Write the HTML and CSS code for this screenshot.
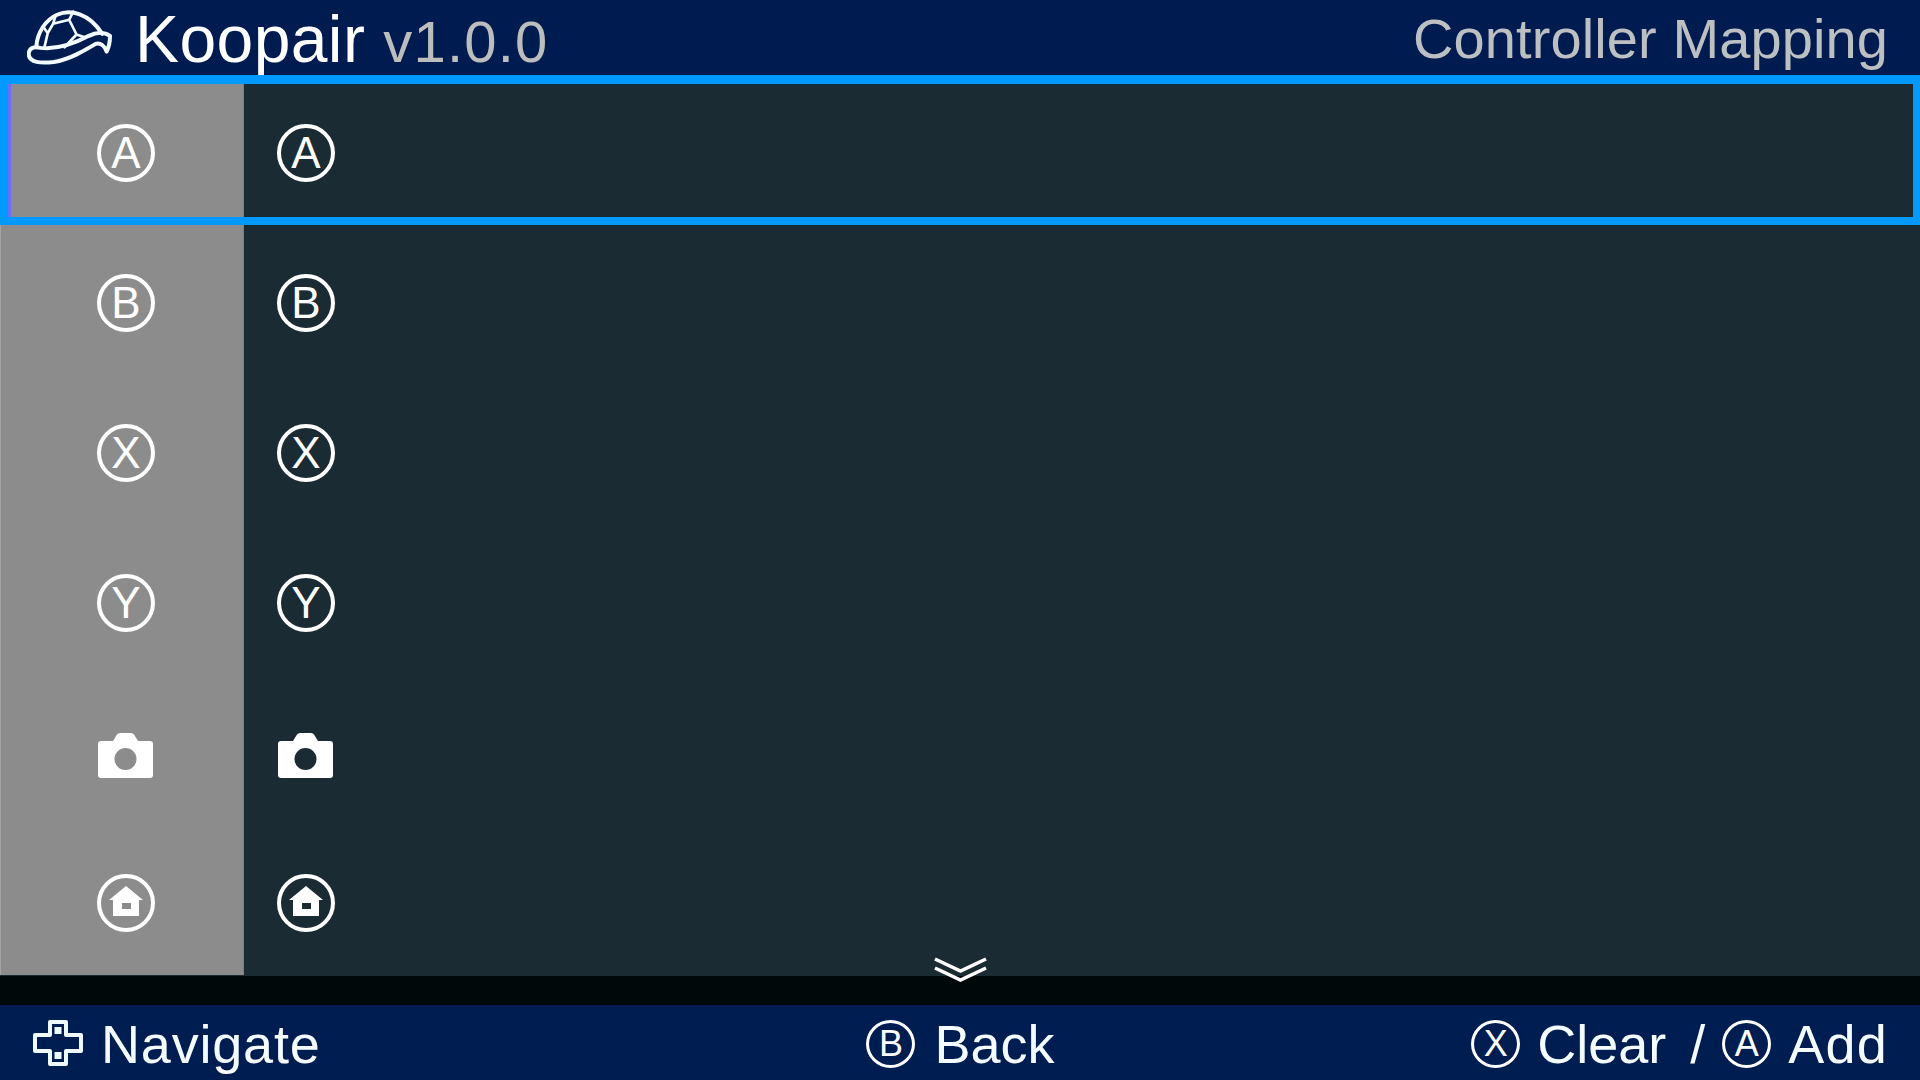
FILE: index.html
```html
<!DOCTYPE html>
<html>
<head>
  <title>Koopair</title>
  <link rel="stylesheet" href="styles.css">
</head>
<body>
  <svg class="defs" width="0" height="0">
    <symbol id="camera" viewBox="0 0 55 45">
      <path fill-rule="evenodd" d="M3 8H15L19 1.500Q20 0 22 0H33Q35 0 36 1.500L40 8H52Q55 8 55 11V42Q55 45 52 45H3Q0 45 0 42V11Q0 8 3 8ZM27.500 15A11 11 0 1 0 27.500 37A11 11 0 1 0 27.500 15Z"/>
    </symbol>
    <symbol id="home" viewBox="0 0 58 58">
      <circle cx="29" cy="29" r="27" fill="none" stroke="#fff" stroke-width="4"/>
      <path fill-rule="evenodd" d="M29 12L46 26H42V42H16V26H12ZM25 29V35H34V29Z"/>
    </symbol>
  </svg>

  <div class="app">
    <header class="top-bar">
      <div class="brand">
        <svg class="logo" viewBox="20 25 260 170">
          <path class="logo-line" d="M48 140C50 100 75 60 110 45C150 28 205 40 245 102"/>
          <path class="logo-line" d="M25 160C28 142 42 140 60 144C110 150 160 132 205 108C225 98 250 95 268 108C268 125 265 142 258 155C252 138 240 128 225 132C195 150 150 178 100 186C65 190 24 190 25 160Z"/>
          <path class="logo-line thin" d="M72 142L82 100L98 72L146 60L168 104L132 142M146 60L158 36M168 104L192 112M82 100L68 80M98 72L105 48"/>
        </svg>
        <span class="app-name">Koopair</span>
        <span class="app-version">v1.0.0</span>
      </div>
      <div class="page-title">Controller Mapping</div>
    </header>

    <main class="mapping-list">
      <div class="row selected">
        <div class="row-key"><span class="glyph">A</span></div>
        <div class="row-value"><span class="glyph">A</span></div>
      </div>
      <div class="row">
        <div class="row-key"><span class="glyph">B</span></div>
        <div class="row-value"><span class="glyph">B</span></div>
      </div>
      <div class="row">
        <div class="row-key"><span class="glyph">X</span></div>
        <div class="row-value"><span class="glyph">X</span></div>
      </div>
      <div class="row">
        <div class="row-key"><span class="glyph">Y</span></div>
        <div class="row-value"><span class="glyph">Y</span></div>
      </div>
      <div class="row">
        <div class="row-key"><svg class="camera-icon"><use href="#camera"/></svg></div>
        <div class="row-value"><svg class="camera-icon"><use href="#camera"/></svg></div>
      </div>
      <div class="row">
        <div class="row-key"><svg class="home-icon"><use href="#home"/></svg></div>
        <div class="row-value"><svg class="home-icon"><use href="#home"/></svg></div>
      </div>
    </main>

    <div class="scroll-strip">
      <svg class="more-icon" viewBox="0 0 55 26">
        <path d="M2 3L27.500 15L53 3M2 12L27.500 24L53 12"/>
      </svg>
    </div>

    <footer class="bottom-bar">
      <div class="hint hint-left">
        <svg class="dpad" viewBox="0 0 50 46">
          <path class="dpad-line" d="M17 2H33V15H48V31H33V44H17V31H2V15H17Z"/>
          <rect class="dpad-dot" x="21.500" y="7" width="7" height="7"/>
          <rect class="dpad-dot" x="21.500" y="32" width="7" height="7"/>
        </svg>
        <span class="hint-spaced">Navigate</span>
      </div>
      <div class="hint hint-center">
        <span class="glyph small">B</span>
        <span>Back</span>
      </div>
      <div class="hint hint-right">
        <span class="glyph small">X</span>
        <span class="hint-wide">Clear /</span>
        <span class="glyph small">A</span>
        <span class="hint-spaced-more">Add</span>
      </div>
    </footer>
  </div>
</body>
</html>
```

FILE: styles.css
```css
* {
  box-sizing: border-box;
}

body {
  margin: 0;
  background-color: #1b2b33;
  font-family: "Liberation Sans", Arial, sans-serif;
  color: #fff;
}

.defs {
  position: absolute;
}

.app {
  display: flex;
  flex-direction: column;
  width: 1920px;
  height: 1080px;
  overflow: hidden;
}

/* header */
.top-bar {
  display: flex;
  justify-content: space-between;
  height: 75px;
  padding: 0 32px 0 27px;
  background-color: #001b4f;
}

.brand {
  display: flex;
  align-items: baseline;
  padding-top: 3px;
}

.logo {
  align-self: flex-start;
  width: 87px;
  height: 57px;
  margin-top: 5px;
  margin-right: 21px;
}

.logo-line {
  fill: none;
  stroke: #f2fbff;
  stroke-width: 12;
  stroke-linejoin: round;
  stroke-linecap: round;
}

.logo-line.thin {
  stroke-width: 8;
}

.app-name {
  font-size: 66px;
  line-height: 72px;
  letter-spacing: 0.4px;
  color: #fff;
}

.app-version {
  margin-left: 18px;
  font-size: 58px;
  letter-spacing: 1.2px;
  color: #bcbdbd;
}

.page-title {
  padding-top: 1px;
  font-size: 56px;
  line-height: 75px;
  letter-spacing: 0.1px;
  color: #bcc0c2;
}

/* mapping rows */
.mapping-list {
  flex: 1;
  min-height: 0;
}

.row {
  position: relative;
  display: flex;
  height: 150px;
}

.row.selected::after {
  content: "";
  position: absolute;
  top: 0;
  right: 0;
  bottom: 0;
  left: 0;
  border-style: solid;
  border-color: #0099ff;
  border-width: 9px 7px 8px 8px;
}

.row-key {
  display: flex;
  align-items: center;
  width: 244px;
  padding-left: 96px;
  padding-top: 6px;
  background-color: #8c8c8c;
  border-left: 1px solid #a3a3a3;
  border-right: 1px solid #78807f;
}

.row.selected .row-key {
  box-shadow: inset 10px 0 0 #6b6dff;
}

.row-value {
  display: flex;
  flex: 1;
  align-items: center;
  padding-left: 33px;
  padding-top: 6px;
  background-color: #1b2b33;
}

.glyph {
  display: flex;
  flex: none;
  align-items: center;
  justify-content: center;
  width: 58px;
  height: 58px;
  border: 4px solid #fff;
  border-radius: 50%;
  font-size: 44px;
  line-height: 1;
  color: #fff;
}

.glyph.small {
  width: 49px;
  height: 48px;
  border-width: 3px;
  font-size: 36px;
}

.camera-icon {
  width: 55px;
  height: 45px;
  margin-left: 1px;
  margin-top: 4px;
  fill: #fff;
}

.home-icon {
  width: 58px;
  height: 58px;
  fill: #fff;
}

/* strip above footer */
.scroll-strip {
  position: relative;
  flex: none;
  height: 29px;
  background-color: #010809;
}

.more-icon {
  position: absolute;
  top: -20px;
  left: 933px;
  width: 55px;
  height: 26px;
}

.more-icon path {
  fill: none;
  stroke: #fff;
  stroke-width: 3.500;
}

/* footer */
.bottom-bar {
  display: grid;
  grid-template-columns: 1fr auto 1fr;
  align-items: center;
  height: 75px;
  padding: 2px 32px 0 33px;
  background-color: #001d52;
  font-size: 54px;
  color: #f4fcff;
}

.hint {
  display: flex;
  align-items: center;
  gap: 20px;
}

.hint-left {
  gap: 18px;
}

.hint-center {
  gap: 19px;
}

.hint-right {
  justify-content: flex-end;
  gap: 17px;
}

.hint-spaced {
  letter-spacing: 0.8px;
}

.hint-spaced-more {
  letter-spacing: 1.2px;
}

.hint-wide {
  word-spacing: 9px;
}

.dpad {
  width: 50px;
  height: 46px;
  margin-top: -2px;
}

.dpad-line {
  fill: none;
  stroke: #eefaff;
  stroke-width: 4;
  stroke-linejoin: round;
}

.dpad-dot {
  fill: #eefaff;
}
```
